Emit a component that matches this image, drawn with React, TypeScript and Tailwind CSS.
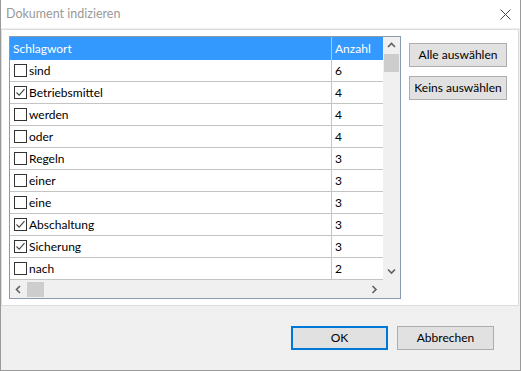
import React from 'react';

const rows = [
  { word: 'sind', count: 6, checked: false },
  { word: 'Betriebsmittel', count: 4, checked: true },
  { word: 'werden', count: 4, checked: false },
  { word: 'oder', count: 4, checked: false },
  { word: 'Regeln', count: 3, checked: false },
  { word: 'einer', count: 3, checked: false },
  { word: 'eine', count: 3, checked: false },
  { word: 'Abschaltung', count: 3, checked: true },
  { word: 'Sicherung', count: 3, checked: true },
  { word: 'nach', count: 2, checked: false },
];

function CheckBox({ checked }: { checked: boolean }) {
  return (
    <div className="w-[13px] h-[13px] border border-[#333333] bg-white flex items-center justify-center shrink-0">
      {checked && (
        <svg width="11" height="11" viewBox="0 0 11 11">
          <path d="M1.5 5.5 L4.2 8.2 L9.5 2.2" fill="none" stroke="#444444" strokeWidth="1.1" />
        </svg>
      )}
    </div>
  );
}

function Chevron({ dir }: { dir: 'up' | 'down' | 'left' | 'right' }) {
  const d = {
    up: 'M1 5 L4.5 1.5 L8 5',
    down: 'M1 1.5 L4.5 5 L8 1.5',
    left: 'M5 1 L1.5 4.5 L5 8',
    right: 'M1.5 1 L5 4.5 L1.5 8',
  }[dir];
  const vertical = dir === 'up' || dir === 'down';
  return (
    <svg width={vertical ? 9 : 7} height={vertical ? 7 : 9} viewBox={vertical ? '0 0 9 7' : '0 0 7 9'}>
      <path d={d} fill="none" stroke="#606060" strokeWidth="1.6" />
    </svg>
  );
}

function WinButton({ label, primary = false, wide = false }: { label: string; primary?: boolean; wide?: boolean }) {
  return (
    <div
      className={`h-[24px] ${wide ? 'w-[98px]' : 'w-[97px]'} bg-[#e1e1e1] flex items-center justify-center text-[12px] text-black ${
        primary ? 'border-2 border-[#0078d7]' : 'border border-[#adadad]'
      }`}
    >
      {label}
    </div>
  );
}

export default function App() {
  return (
    <div className="w-[521px] h-[371px] flex flex-col border-x border-b border-[#9a9a9a] font-['Segoe_UI',Lato,sans-serif] select-none">
      {/* Title bar */}
      <div className="h-[28px] bg-white flex items-center justify-between pl-[5px] pr-[9px] shrink-0">
        <span className="text-[12.5px] text-[#999999]">Dokument indizieren</span>
        <svg width="11" height="11" viewBox="0 0 11 11">
          <path d="M0.5 0.5 L10.5 10.5 M10.5 0.5 L0.5 10.5" stroke="#444444" strokeWidth="1" />
        </svg>
      </div>

      {/* Client area */}
      <div className="flex-1 bg-[#f0f0f0] flex flex-col">
        <div className="mt-[1px] mr-[1px] h-[277px] bg-white border border-[#dcdcdc] flex items-start">
          {/* List view */}
          <div className="ml-[7px] mt-[6px] w-[392px] h-[263px] border border-[#8a9bb0] flex flex-col bg-white">
            <div className="flex h-[243px]">
              <div className="w-[373px] flex flex-col text-[12px]">
                <div className="h-[23px] bg-[#3399ff] text-white flex shrink-0">
                  <div className="w-[322px] border-r border-[#9fcbff] pl-[3px] flex items-center">Schlagwort</div>
                  <div className="flex-1 pl-[3px] flex items-center">Anzahl</div>
                </div>
                {rows.map((r) => (
                  <div key={r.word} className="h-[22px] border-b border-[#c4c4c4] flex text-black shrink-0">
                    <div className="w-[322px] border-r border-[#c4c4c4] pl-[4px] flex items-center gap-[2px]">
                      <CheckBox checked={r.checked} />
                      <span>{r.word}</span>
                    </div>
                    <div className="flex-1 pl-[3px] flex items-center">{r.count}</div>
                  </div>
                ))}
              </div>
              {/* Vertical scrollbar */}
              <div className="w-[17px] bg-[#f0f0f0] flex flex-col items-center">
                <div className="h-[17px] w-full flex items-center justify-center">
                  <Chevron dir="up" />
                </div>
                <div className="w-[15px] h-[18px] bg-[#cdcdcd]" />
                <div className="flex-1" />
                <div className="h-[17px] w-full flex items-center justify-center">
                  <Chevron dir="down" />
                </div>
              </div>
            </div>
            {/* Horizontal scrollbar */}
            <div className="flex-1 flex bg-[#f0f0f0]">
              <div className="w-[373px] flex items-center">
                <div className="w-[17px] h-full flex items-center justify-center">
                  <Chevron dir="left" />
                </div>
                <div className="w-[17px] h-[15px] bg-[#cdcdcd]" />
                <div className="flex-1" />
                <div className="w-[17px] h-full flex items-center justify-center">
                  <Chevron dir="right" />
                </div>
              </div>
              <div className="flex-1" />
            </div>
          </div>

          {/* Side buttons */}
          <div className="ml-[8px] mt-[13px] flex flex-col gap-[9px]">
            <WinButton label="Alle auswählen" wide />
            <WinButton label="Keins auswählen" wide />
          </div>
        </div>

        {/* Bottom buttons */}
        <div className="mt-[20px] mr-[26px] flex justify-end gap-[9px]">
          <WinButton label="OK" primary />
          <WinButton label="Abbrechen" />
        </div>
      </div>
    </div>
  );
}
